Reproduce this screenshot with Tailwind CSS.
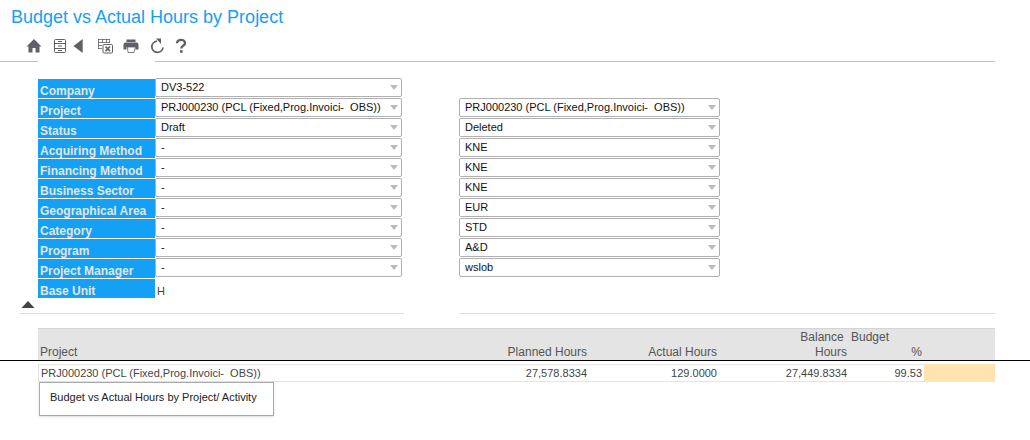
<!DOCTYPE html>
<html lang="en">
	<head>
		<meta charset="utf-8">
		<meta name="viewport" content="width=device-width, initial-scale=1">
		<title>Budget vs Actual Hours by Project</title>
		<script src="https://cdn.jsdelivr.net/npm/@tailwindcss/browser@4"></script>
	</head>
	<body class="min-h-screen bg-white font-['Liberation_Sans',Arial,sans-serif] text-[11px] text-[#444]">
		<header>
			<h1 class="pl-[11px] pt-[5px] text-[18px] leading-6 text-[#14a0f5]">Budget vs Actual Hours by Project</h1>

			<nav class="flex items-center pl-[26px] pt-[2px] h-[32px] text-[#5f6068]">
				<button aria-label="Home" class="w-4 h-4">
					<svg viewBox="0 0 16 16" class="w-4 h-4" fill="currentColor"><path d="M8 1 .5 8.500h2v6h4V10h3v4.500h4v-6h2z"/></svg>
				</button>
				<button aria-label="Filing cabinet" class="ml-[10px] w-4 h-4">
					<svg viewBox="0 0 16 16" class="w-4 h-4" fill="none" stroke="currentColor"><rect x="2.500" y="1.500" width="11" height="13" rx="1"/><path d="M2.500 5.500h11M2.500 10.500h11M6 3.500h4M6 8h4M6 12.500h4"/></svg>
				</button>
				<button aria-label="Back" class="ml-1 w-4 h-4">
					<svg viewBox="0 0 16 16" class="w-4 h-4" fill="currentColor"><path d="M10.700 1v14L1.500 8z"/></svg>
				</button>
				<button aria-label="Export to Excel" class="ml-[9px] w-4 h-4">
					<svg viewBox="0 0 16 16" class="w-4 h-4" fill="none" stroke="currentColor"><path d="M1 1.500h12M1 4.500h12M1 7.500h4M1 10.500h4M1.500 1v10M5.500 1v4M9.500 1v4M12.500 1v4" stroke-width=".8"/><rect x="6" y="6.500" width="9.500" height="8.500" rx="1"/><path d="m8.500 8.500 4.500 4.700M13 8.500l-4.500 4.700" stroke-width="1.700"/></svg>
				</button>
				<button aria-label="Print" class="ml-[10px] w-4 h-4">
					<svg viewBox="0 0 16 16" class="w-4 h-4" fill="currentColor"><path d="M3.500 1.500h9V4h-9zM2.500 4.500h11q2 0 2 2v5h-3V9h-9v2.500h-3v-5q0-2 2-2z"/><path d="M4.500 9h8L11 14.500H5z" fill="#fff" stroke="currentColor" stroke-width=".8"/></svg>
				</button>
				<button aria-label="Refresh" class="ml-[10px] w-4 h-4">
					<svg viewBox="0 0 16 16" class="w-4 h-4"><path d="M8 3.200A5.600 5.600 0 1 0 14 9.500" fill="none" stroke="currentColor" stroke-width="1.800"/><path d="M7 .6h5v5.500z" fill="currentColor"/></svg>
				</button>
				<button aria-label="Help" class="ml-2 w-4 h-4">
					<svg viewBox="0 0 16 16" class="w-4 h-4"><path d="M4 5.200C4 .8 12 .8 12 5.200 12 8 8.300 7.600 8.300 10.500" fill="none" stroke="currentColor" stroke-width="2.400"/><path d="M7 12.200h2.600v2.500H7z" fill="currentColor"/></svg>
				</button>
			</nav>

			<div class="flex gap-[117px] pr-[35px]">
				<div class="w-[38px] h-px bg-[#c0c0c0]"></div>
				<div class="grow h-px bg-[#c0c0c0]"></div>
			</div>
		</header>

		<main>
			<form id="filters" class="ml-[38px] mr-[35px] mt-4 grid grid-cols-[117px_249fr_55px_536fr] auto-rows-[20px]"></form>

			<div class="ml-[19px] mr-[35px]">
				<button aria-label="Collapse filters" class="block w-[18px] h-[15px]">
					<svg viewBox="0 0 18 15" class="w-[18px] h-[15px]"><path d="M9 3 15.500 10h-13z" fill="#444"/></svg>
				</button>
				<div class="grid grid-cols-[19px_117px_249fr_55px_536fr]">
					<div class="col-span-3 h-px bg-[#dcdcdc]"></div>
					<div></div>
					<div class="h-px bg-[#dcdcdc]"></div>
				</div>
			</div>

			<section class="relative mt-[14px] pl-[38px] pr-[35px]">
				<table class="w-full table-fixed border-separate border-spacing-0">
					<thead class="bg-[#e4e4e4] text-[12px] leading-[15px] text-[#555]">
						<tr class="h-[32px] align-bottom *:border-t *:border-[#d4d4d4]">
							<th class="pl-[2px] text-left font-normal">Project</th>
							<th class="w-[130px] pr-[2px] text-right font-normal">Planned Hours</th>
							<th class="w-[130px] pr-[2px] text-right font-normal">Actual Hours</th>
							<th class="w-[130px] pr-[2px] text-right font-normal">Balance&nbsp;<br>Hours</th>
							<th class="w-[75px] px-[2px] text-right font-normal"><span class="block text-left">Budget</span>%</th>
							<th class="w-[71px]"></th>
						</tr>
					</thead>
					<tbody>
						<tr class="h-1"><td colspan="6"></td></tr>
						<tr class="h-[18px] leading-[15px]">
							<td class="border-y border-l border-[#e4e4e4] pt-px pl-[2px]">PRJ000230 (PCL (Fixed,Prog.Invoici-&nbsp; OBS))</td>
							<td class="border-y border-[#e4e4e4] pt-px pr-[2px] text-right">27,578.8334</td>
							<td class="border-y border-[#e4e4e4] pt-px pr-[2px] text-right">129.0000</td>
							<td class="border-y border-[#e4e4e4] pt-px pr-[2px] text-right">27,449.8334</td>
							<td class="border-y border-[#e4e4e4] pt-px pr-[2px] text-right">99.53</td>
							<td class="bg-[#ffe3b0]"></td>
						</tr>
					</tbody>
				</table>
				<div class="absolute inset-x-0 top-[32px] h-px bg-black"></div>
				<a href="#" class="ml-px block w-fit border border-[#aaa] bg-white pl-[10px] pr-4 pt-[6px] pb-[10px] leading-4 text-[#222] shadow-sm">Budget vs Actual Hours by Project/ Activity</a>
			</section>
		</main>

		<script type="text/javascript">
			const project = 'PRJ000230 (PCL (Fixed,Prog.Invoici-&nbsp; OBS))'

			// label, from value, to value
			const filters = [
				['Company', 'DV3-522', ''],
				['Project', project, project],
				['Status', 'Draft', 'Deleted'],
				['Acquiring Method', '-', 'KNE'],
				['Financing Method', '-', 'KNE'],
				['Business Sector', '-', 'KNE'],
				['Geographical Area', '-', 'EUR'],
				['Category', '-', 'STD'],
				['Program', '-', 'A&amp;D'],
				['Project Manager', '-', 'wslob']
			]

			const arrow = '<svg viewBox="0 0 8 5" class="pointer-events-none absolute right-1 top-[7px] w-2 h-[5px]"><path d="M0 0h8L4 5z" fill="#bbb"/></svg>'

			function label(id, text) {
				return `<label for="${id}" class="mt-px pl-[2px] pt-1 overflow-hidden bg-[#14a0f5] text-[12px] leading-4 font-bold text-[#e4e4e4]">${text}</label>`
			}

			function select(id, value, name) {
				return `<select id="${id}" aria-label="${name}" class="block w-full h-[19px] appearance-none rounded-xs border border-[#b0b0b0] bg-white pb-px pl-[5px] pr-4 leading-4 text-[#111]"><option>${value}</option></select>${arrow}`
			}

			let rows = ''
			filters.forEach(([text, from, to], x) => {
				rows += label('from_' + x, text)
				rows += `<div class="relative mr-[2px]">${select('from_' + x, from, text)}</div><div></div>`
				rows += to ? `<div class="relative w-[261px] max-w-full">${select('to_' + x, to, text + ' to')}</div>` : '<div></div>'
			})
			rows += label('base_unit', 'Base Unit')
			rows += '<output id="base_unit" class="pl-[2px] pt-[5px] leading-4">H</output>'

			document.getElementById('filters').innerHTML = rows
		</script>
	</body>
</html>
